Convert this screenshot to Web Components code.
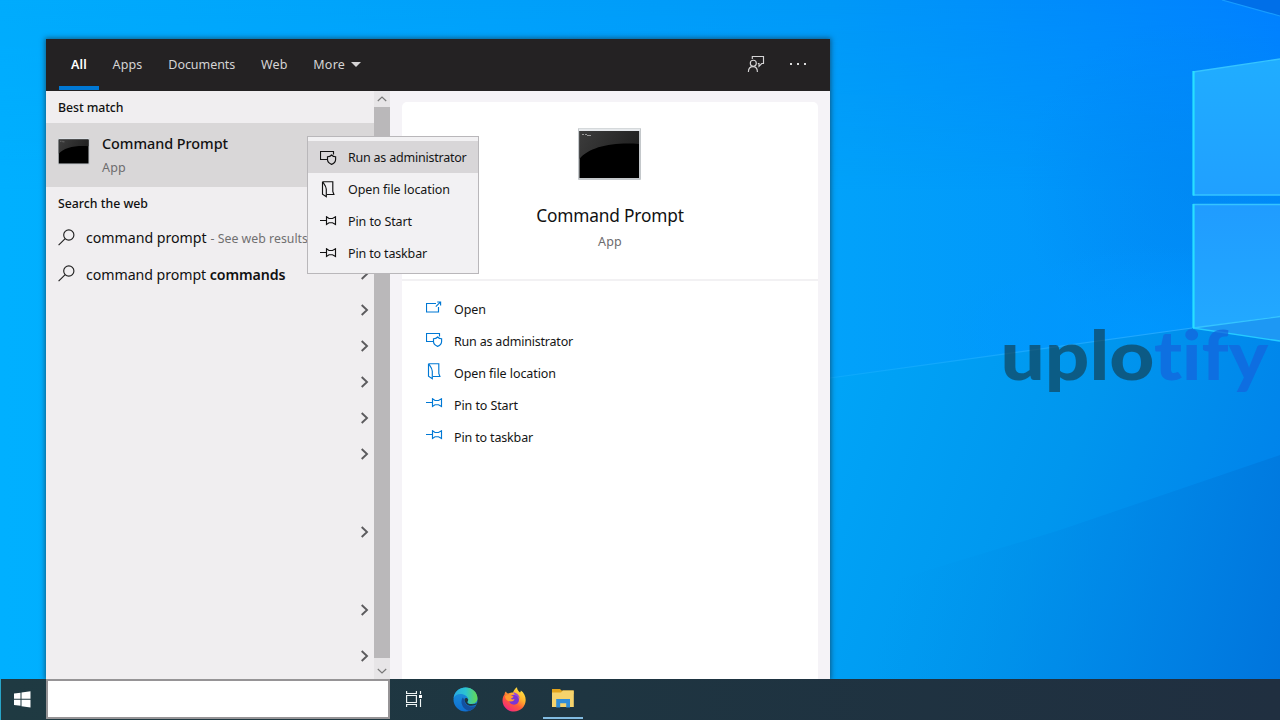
<!DOCTYPE html>
<html lang="en">
<head>
<meta charset="utf-8">
<title>Search</title>
<style>
html,body{margin:0;width:1280px;height:720px;overflow:hidden;background:#009cf5;font-family:"Noto Sans","Open Sans",sans-serif}
</style>
</head>
<body>
<desk-top></desk-top>
<script>
const define = (name, html, after) => customElements.define(name, class extends HTMLElement {
  connectedCallback() {
    if (this.shadowRoot) return;
    this.attachShadow({ mode: 'open' }).innerHTML = typeof html === 'function' ? html(this) : html;
    if (after) after(this);
  }
});

/* Text on one line, tracked so that it fills the width given in "w". */
define('ui-label', el => `<style>
:host{display:block;white-space:nowrap;width:${el.getAttribute('w')}px;flex:none}
span{display:inline-block}
</style><span><slot></slot></span>`, el => {
  const s = el.shadowRoot.querySelector('span');
  const n = el.textContent.length;
  const d = (parseFloat(el.getAttribute('w')) - s.getBoundingClientRect().width) / n;
  s.style.letterSpacing = d.toFixed(3) + 'px';
});

const ICONS = {
  admin: [17, 16, '<path d="M7 9.5H.5V1.5H13.5V4.5M11.6 5C10.5 6.2 9 6.7 7.5 6.7V9.6C7.5 12 9.5 13.6 11.6 14.4C13.7 13.6 15.6 12 15.6 9.6V6.7C14.2 6.7 12.7 6.2 11.6 5Z"/>'],
  file: [17, 17, '<path d="M2.5 .7H12.8V10.5L13.9 13.5H7M2.5 .7V13.3L6.3 15.8V8.2C6.3 5.2 4.4 3.6 2.5 .7"/>'],
  pin: [17, 10, '<path d="M0 4.5H6.5M6.5 .8L9 2.5H12.5L15.5 .8V8.4L12.5 6.7H9L6.5 8.4Z"/>'],
  open: [17, 13, '<path d="M10 2.5H.5V11H12.5V6M9.8 5.7L14.6 .9M11.2 1H14.6V4.4"/>'],
  search: [17, 17, '<circle cx="10.8" cy="6" r="5.1"/><path d="M7.2 9.7L.6 16.2"/>'],
  user: [18, 18, '<circle cx="6.3" cy="8.2" r="3"/><path d="M1.4 17C1.4 13.4 3.4 11.6 6 11.6S10.4 13.4 10.4 17M5.3 4V1.5H16.5V8.5H14.7L12 11.3V8.5H10.8"/>'],
  chevron: [9, 14, '<path d="M1.7 2L7 7L1.7 12" stroke-width="1.9"/>'],
  up: [10, 6, '<path d="M.8 5L5 1L9.2 5"/>'],
  down: [10, 6, '<path d="M.8 1L5 5L9.2 1"/>']
};
define('ui-icon', el => {
  const [w, h, d] = ICONS[el.getAttribute('name')];
  return `<style>:host{display:block;flex:none;width:${w}px;height:${h}px}svg{display:block}</style>
<svg width="${w}" height="${h}" viewBox="0 0 ${w} ${h}" fill="none" stroke="currentColor" stroke-width="1.15">${d}</svg>`;
});

define('console-icon', el => {
  const big = el.hasAttribute('big'), w = big ? 64 : 32, h = big ? 53 : 27;
  return `<style>:host{display:block;flex:none;width:${w}px;height:${h}px}svg{display:block}</style>
<svg width="${w}" height="${h}" viewBox="0 0 64 53" preserveAspectRatio="none">
<defs><linearGradient id="g" x1="0" x2="1" y1="0" y2=".3"><stop stop-color="#3c3c3c"/><stop offset="1" stop-color="#222"/></linearGradient></defs>
<rect width="63" height="52" rx="1" fill="#c4c8cb"/><rect x="1" y=".5" width="61" height="2.5" fill="#e6e9ec"/>
<rect x="1.500" y="3" width="59.5" height="47" fill="#000"/>
<path d="M1.500 3H61V16C34 14 11 19 1.500 31Z" fill="url(#g)"/>
<path d="M4 6.500H6M7 6.500H9M9 7.500H13" stroke="#999" stroke-width="1"/></svg>`;
});

define('wall-paper', `<style>:host{display:block;position:absolute;inset:0}svg{display:block}</style>
<svg width="1280" height="720" viewBox="0 0 1280 720">
<defs>
<linearGradient id="b" x1="0" x2="1280" y1="0" y2="0" gradientUnits="userSpaceOnUse"><stop stop-color="#00b0ff"/><stop offset=".3" stop-color="#00aafb"/><stop offset=".65" stop-color="#02a2fa"/><stop offset="1" stop-color="#008cfb"/></linearGradient>
<linearGradient id="t" x1="0" x2="1280" y1="0" y2="0" gradientUnits="userSpaceOnUse"><stop stop-color="#00abfd"/><stop offset=".65" stop-color="#0098f8"/><stop offset="1" stop-color="#0080ff"/></linearGradient>
<linearGradient id="fade" x1="0" x2="0" y1="0" y2="1"><stop stop-color="#fff"/><stop offset="1" stop-color="#000"/></linearGradient>
<mask id="m"><rect width="1280" height="190" fill="url(#fade)"/></mask>
<radialGradient id="d" cx="1190" cy="190" r="170" gradientUnits="userSpaceOnUse"><stop stop-color="#0084f0" stop-opacity=".55"/><stop offset="1" stop-color="#0084f0" stop-opacity="0"/></radialGradient>
<radialGradient id="r" cx="1140" cy="330" r="200" gradientUnits="userSpaceOnUse" gradientTransform="translate(0 190) scale(1 .42)"><stop stop-color="#0098ff" stop-opacity=".8"/><stop offset="1" stop-color="#0098ff" stop-opacity="0"/></radialGradient>
<linearGradient id="l" x1="832" x2="1290" y1="400" y2="560" gradientUnits="userSpaceOnUse"><stop stop-color="#00a4f7"/><stop offset=".5" stop-color="#0096ee"/><stop offset="1" stop-color="#0080ea"/></linearGradient>
<linearGradient id="l2" x1="900" x2="1290" y1="560" y2="660" gradientUnits="userSpaceOnUse"><stop stop-color="#0094ea" stop-opacity="0"/><stop offset=".45" stop-color="#0088e6" stop-opacity=".6"/><stop offset="1" stop-color="#0074dc"/></linearGradient>
<linearGradient id="w" x1="0" x2="0" y1="0" y2="1"><stop stop-color="#20adff"/><stop offset="1" stop-color="#20a0ff"/></linearGradient>
<linearGradient id="v" x1="0" x2="0" y1="0" y2="1"><stop stop-color="#209cff"/><stop offset="1" stop-color="#22a9ff"/></linearGradient>
<linearGradient id="ray" x1="830" x2="1192" y1="0" y2="0" gradientUnits="userSpaceOnUse"><stop stop-color="#18b0ff" stop-opacity=".5"/><stop offset="1" stop-color="#25a8ff"/></linearGradient>
</defs>
<rect width="1280" height="720" fill="url(#b)"/><rect width="1280" height="190" fill="url(#t)" mask="url(#m)"/>
<rect x="1000" width="280" height="400" fill="url(#d)"/><rect x="900" y="240" width="380" height="120" fill="url(#r)"/>
<path d="M1222 0L1280 16V0Z" fill="#006fe8"/><path d="M1222 0L1280 16" stroke="#169cff" stroke-width="1.2"/>
<path d="M830 378L1192 328L1280 342V720H830Z" fill="url(#l)"/>
<path d="M830 378L1192 328" stroke="url(#ray)" stroke-width="1.2"/>
<path d="M830 600L1060 530L1280 455V720H830Z" fill="url(#l2)"/>
<path d="M1192 328L1280 316V341Z" fill="#1d98f4"/>
<path d="M1193 72L1280 59V195H1193Z" fill="url(#w)"/><path d="M1193 204H1280V316L1193 328Z" fill="url(#v)"/>
<path d="M1193 72L1280 59M1193 195H1280M1193 204.5H1280M1193 328L1280 316.500" stroke="#35c4ff" stroke-width="1.3" fill="none"/>
<path d="M1193 328L1280 341" stroke="#25cbff" stroke-width="1.3"/>
<path d="M1193.500 71V195.500M1193.500 204V328" stroke="#28e0ff" stroke-width="2.200"/>
</svg>`);

define('water-mark', `<style>:host{display:block;position:absolute;left:1000px;top:310px}svg{display:block}text{font-family:Lato,sans-serif;font-weight:900;font-size:69px;font-variant-ligatures:none}</style>
<svg width="280" height="100" viewBox="0 0 280 100"><text x=".5" y="70" textLength="154" lengthAdjust="spacingAndGlyphs" fill="#123f52" fill-opacity=".68">uplo</text><text x="154" y="70" textLength="114" lengthAdjust="spacingAndGlyphs" fill="#1464dc" fill-opacity=".72">tify</text></svg>`);

define('search-header', `<style>
:host{display:flex;height:52px;background:#242223;color:#d5d4d5;font-size:12.5px;align-items:center;flex:none;box-sizing:border-box;padding-left:13px}
.tab{height:52px;display:flex;align-items:center;box-sizing:border-box;padding-bottom:2px}
.on{width:40px;padding-left:12px;color:#fff;font-weight:600;border-bottom:4px solid #0078d4;padding-bottom:0;height:51px;align-self:flex-start}
.on ui-label{margin-top:3px}
.a{margin-left:13.500px}.b{margin-left:25.800px}
.tri{width:0;border:5.500px solid transparent;border-top-color:#d5d4d5;border-bottom:0;margin-left:5.500px}
.fill{flex:1}.user{margin-right:25px;margin-top:-2px}
.dots{display:flex;gap:5px;margin-right:24px;margin-top:-3px}.dots i{width:2px;height:2px;background:#dcdcdc}
</style>
<div class="tab on"><ui-label w="16">All</ui-label></div>
<div class="tab a"><ui-label w="30">Apps</ui-label></div>
<div class="tab b"><ui-label w="67">Documents</ui-label></div>
<div class="tab b"><ui-label w="26.300">Web</ui-label></div>
<div class="tab b"><ui-label w="32">More</ui-label><div class="tri"></div></div>
<div class="fill"></div><ui-icon class="user" name="user"></ui-icon><div class="dots"><i></i><i></i><i></i></div>`);

define('result-row', `<style>
:host{display:flex;height:36px;align-items:center;box-sizing:border-box;padding:0 5px 0 12px;color:#111;font-size:14.200px;flex:none}
.t{flex:1;display:flex;align-items:baseline}ui-icon{color:#5c5b5e}
</style><div class="t"><slot></slot></div><ui-icon name="chevron"></ui-icon>`);

define('result-list', `<style>
:host{display:flex;flex-direction:column;width:328px;background:#f0eef0;color:#111}
.head{height:32px;display:flex;align-items:center;padding-left:12px;font-size:12.300px;font-weight:500;flex:none}
.best{height:64px;display:flex;background:#d9d7d8;padding:15px 0 0 12px;box-sizing:border-box;flex:none}
.txt{margin-left:12px;margin-top:-5px}
.name{font-size:14.400px;font-weight:500;line-height:22px}.sub{font-size:12.500px;line-height:24px;color:#6d6c6e;margin-top:1px}
.s{color:#222;margin-right:11px;align-self:center;margin-top:-1px}
.d{font-size:12.300px;color:#707070;margin-left:4px}
.g{margin-top:42px}.h{margin-top:10px}.x{height:37px}b{font-weight:600}
</style>
<div class="head"><ui-label w="65.500">Best match</ui-label></div>
<div class="best"><console-icon></console-icon><div class="txt"><ui-label class="name" w="126">Command Prompt</ui-label><ui-label class="sub" w="24">App</ui-label></div></div>
<div class="head"><ui-label w="90">Search the web</ui-label></div>
<result-row class="x"><ui-icon class="s" name="search"></ui-icon><ui-label w="120.500">command prompt</ui-label><ui-label class="d" w="97.500">- See web results</ui-label></result-row>
<result-row><ui-icon class="s" name="search"></ui-icon><ui-label w="199.500">command prompt <b>commands</b></ui-label></result-row>
<result-row></result-row><result-row></result-row><result-row></result-row><result-row></result-row><result-row></result-row>
<result-row class="g"></result-row><result-row class="g"></result-row><result-row class="h"></result-row>`);

define('scroll-bar', `<style>
:host{display:flex;flex-direction:column;width:16px;background:#e7e5e7;color:#777}
div{height:16px;display:grid;place-items:center;flex:none}.thumb{flex:1;background:#bab8ba}.dn{height:21px;padding-bottom:0;}
.dn ui-icon{margin-top:5px}
</style><div><ui-icon name="up"></ui-icon></div><div class="thumb"></div><div class="dn"><ui-icon name="down"></ui-icon></div>`);

define('action-row', el => `<style>
:host{display:flex;height:32px;align-items:center;font-size:12.500px;color:#151515}
ui-icon{width:28px;color:var(--ic,#0078d4);margin-top:var(--up,-3px)}
ui-icon[name=open],ui-icon[name=pin]{margin-top:var(--up,-4px)}
</style><ui-icon name="${el.getAttribute('icon')}" style="width:28px"></ui-icon><ui-label w="${el.getAttribute('w')}">${el.getAttribute('label')}</ui-label>`);

define('detail-pane', `<style>
:host{display:flex;flex:1;background:#f5f3f7;padding:11px 12px 0;box-sizing:border-box}
.card{flex:1;background:#fff;border-radius:5px 5px 0 0;display:flex;flex-direction:column}
.top{height:179px;border-bottom:2px solid #f2f1f3;display:flex;flex-direction:column;align-items:center;box-sizing:border-box;padding-top:26px}
.n{font-size:17.300px;line-height:26px;margin-top:22px;color:#111}.s{font-size:12.500px;line-height:20px;color:#6c6b6d;margin-top:3px}
.acts{padding:12px 0 0 24px}
</style><div class="card"><div class="top"><console-icon big></console-icon><ui-label class="n" w="147.500">Command Prompt</ui-label><ui-label class="s" w="24">App</ui-label></div>
<div class="acts"><action-row icon="open" w="32" label="Open"></action-row><action-row icon="admin" w="119" label="Run as administrator"></action-row><action-row icon="file" w="102" label="Open file location"></action-row><action-row icon="pin" w="64" label="Pin to Start"></action-row><action-row icon="pin" w="79" label="Pin to taskbar"></action-row></div></div>`);

define('context-menu', `<style>
:host{display:block;position:absolute;left:307px;top:136px;width:172px;height:138px;box-sizing:border-box;border:1px solid #b9b7ba;background:#f2f1f3;padding:4px 0}
action-row{--ic:#111;--up:0px;padding-left:12px}.on{background:#d8d6d8;--up:2px}
</style><action-row class="on" icon="admin" w="118.500" label="Run as administrator"></action-row><action-row icon="file" w="102" label="Open file location"></action-row><action-row icon="pin" w="64" label="Pin to Start"></action-row><action-row icon="pin" w="79" label="Pin to taskbar"></action-row>`);

define('search-window', `<style>
:host{display:flex;flex-direction:column;position:absolute;left:46px;top:39px;width:784px;height:640px;box-shadow:0 0 5px 1px rgba(20,50,70,.65)}
.body{flex:1;display:flex;min-height:0}
</style><search-header></search-header><div class="body"><result-list></result-list><scroll-bar></scroll-bar><detail-pane></detail-pane></div>`);

define('task-bar', `<style>
:host{display:flex;position:absolute;left:0;right:0;bottom:0;height:41px;background:linear-gradient(90deg,#1f3a42,#1e3541 45%,#202f40);box-sizing:border-box;border-left:1px solid #28a5c8}
svg{display:block}
.start{width:45px;display:grid;place-items:center;padding-right:3px;box-sizing:border-box}
.box{width:344px;height:40px;box-sizing:border-box;border:2px solid #969496;background:#fff;border-bottom-color:#969496}
.b{height:40px;display:grid;place-items:center}
.tv{width:48px}.ed{width:54px}.ff{width:44px}.ex{width:40px;margin-left:7px;border-bottom:2px solid #82bce2;box-sizing:border-box;height:40px}
</style>
<div class="start"><svg width="17" height="17" viewBox="0 0 17 17"><path d="M0 2.600L6.500 1.700V7.700H0ZM7.500 1.500L16.500 .200V7.700H7.500ZM0 8.700H6.500V14.800L0 13.900ZM7.500 8.700H16.500V16.500L7.500 15.200Z" fill="#fff"/></svg></div>
<div class="box"></div>
<div class="b tv"><svg width="17" height="16" viewBox="0 0 17 16" fill="none" stroke="#f0f5f5" stroke-width="1.150"><path d="M.6 0V2.500H10.400V0M.6 4.500H10.400V11.500H.6ZM.6 16V13.500H10.400V16M14.500 0V3M14.500 8V16"/><path d="M13 4H16V7H13Z" fill="#fff" stroke="none"/></svg></div>
<div class="b ed"><svg width="25" height="25" viewBox="0 0 25 25"><defs>
<linearGradient id="e1" x1="0" x2="1"><stop stop-color="#29a9e0"/><stop offset=".5" stop-color="#2bc3d2"/><stop offset="1" stop-color="#66d94f"/></linearGradient>
<linearGradient id="e2" x1="0" x2="0" y1="0" y2="1"><stop stop-color="#1c94dc"/><stop offset="1" stop-color="#0f6fd0"/></linearGradient></defs>
<circle cx="12.500" cy="12.500" r="12" fill="url(#e2)"/>
<path d="M.6 11C1.500 4.500 6.500 .5 12.600 .5C19.500 .5 24.500 5.500 24.500 11.300C24.500 15 21.500 17 18.500 17C15.500 17 14.300 16 14.300 15.200C14.300 14.600 15.200 14 15.200 12.500C15.200 9.500 11.500 7 7.500 7C4 7 1.500 9 .6 11Z" fill="url(#e1)"/>
<path d="M9.800 10.500C6.500 15 9.500 22.500 16 23.900C19 23 21.500 21 22.800 18.700C18 21 11 18.500 11.500 12.700Z" fill="#14509f"/>
<path d="M11.800 11.500C10.800 15 14 19 18.500 18.800C21 18.700 22.500 17.800 23.300 17.500C23.500 16.900 23.600 16.300 23.600 16C22 17.200 20 17.300 18.500 17C15.500 17 14.300 16 14.300 15.200C14.300 14.600 15.200 14 15.200 12.500C14.500 11 13 10.500 11.800 11.500Z" fill="#1f3540"/></svg></div>
<div class="b ff"><svg width="24" height="25" viewBox="0 0 24 25"><defs>
<linearGradient id="f1" x1=".85" y1=".05" x2=".2" y2="1"><stop stop-color="#ffe847"/><stop offset=".35" stop-color="#ffb22d"/><stop offset=".62" stop-color="#ff5b38"/><stop offset="1" stop-color="#f0208a"/></linearGradient></defs>
<path d="M4 4.500C4.500 6 5.500 6.500 6.500 6.500C8 5.500 9.500 5.500 11 5.500C12 3 13.500 1 15 .3C15 3 16.500 4 18 5.500C18.800 4.800 18.800 4 18.800 3.500C22 5.500 23.700 9.500 23.700 13C23.700 19.500 18.500 24.500 12 24.500C5.500 24.500 .5 19.500 .5 13.500C.5 10.500 1.500 8.500 2.500 7.500C2.500 6.500 3 5 4 4.500Z" fill="url(#f1)"/>
<circle cx="12" cy="12.800" r="5" fill="#7a35d5"/>
<path d="M3 9C5 7.500 8 7.500 11.500 9.500C11.500 10.500 9.500 11 9 12C10 12.500 11 12.500 12.500 12C12 14.500 9 15 6 14C4 13 3 11 3 9Z" fill="#ff9a30"/><path d="M11 5.500C14.500 5.500 17.500 8 17.800 12C17 10 15.500 9 13.500 8.800Z" fill="#9a45dd"/></svg></div>
<div class="b ex"><svg width="22" height="19" viewBox="0 0 22 19"><path d="M0 0H8L9.500 1.500H21.500V5H0Z" fill="#e3a41c"/><path d="M0 3.500H9L11 1.500H21.800V18H0Z" fill="#f6d36c"/><path d="M4.200 10H18V18.500H14.200V14.300H8.200V18.500H4.200Z" fill="#318dd8"/></svg></div>`);

define('desk-top', `<style>:host{display:block;position:relative;width:1280px;height:720px;overflow:hidden}</style>
<wall-paper></wall-paper><water-mark></water-mark><search-window></search-window><context-menu></context-menu><task-bar></task-bar>`);
</script>
</body>
</html>
